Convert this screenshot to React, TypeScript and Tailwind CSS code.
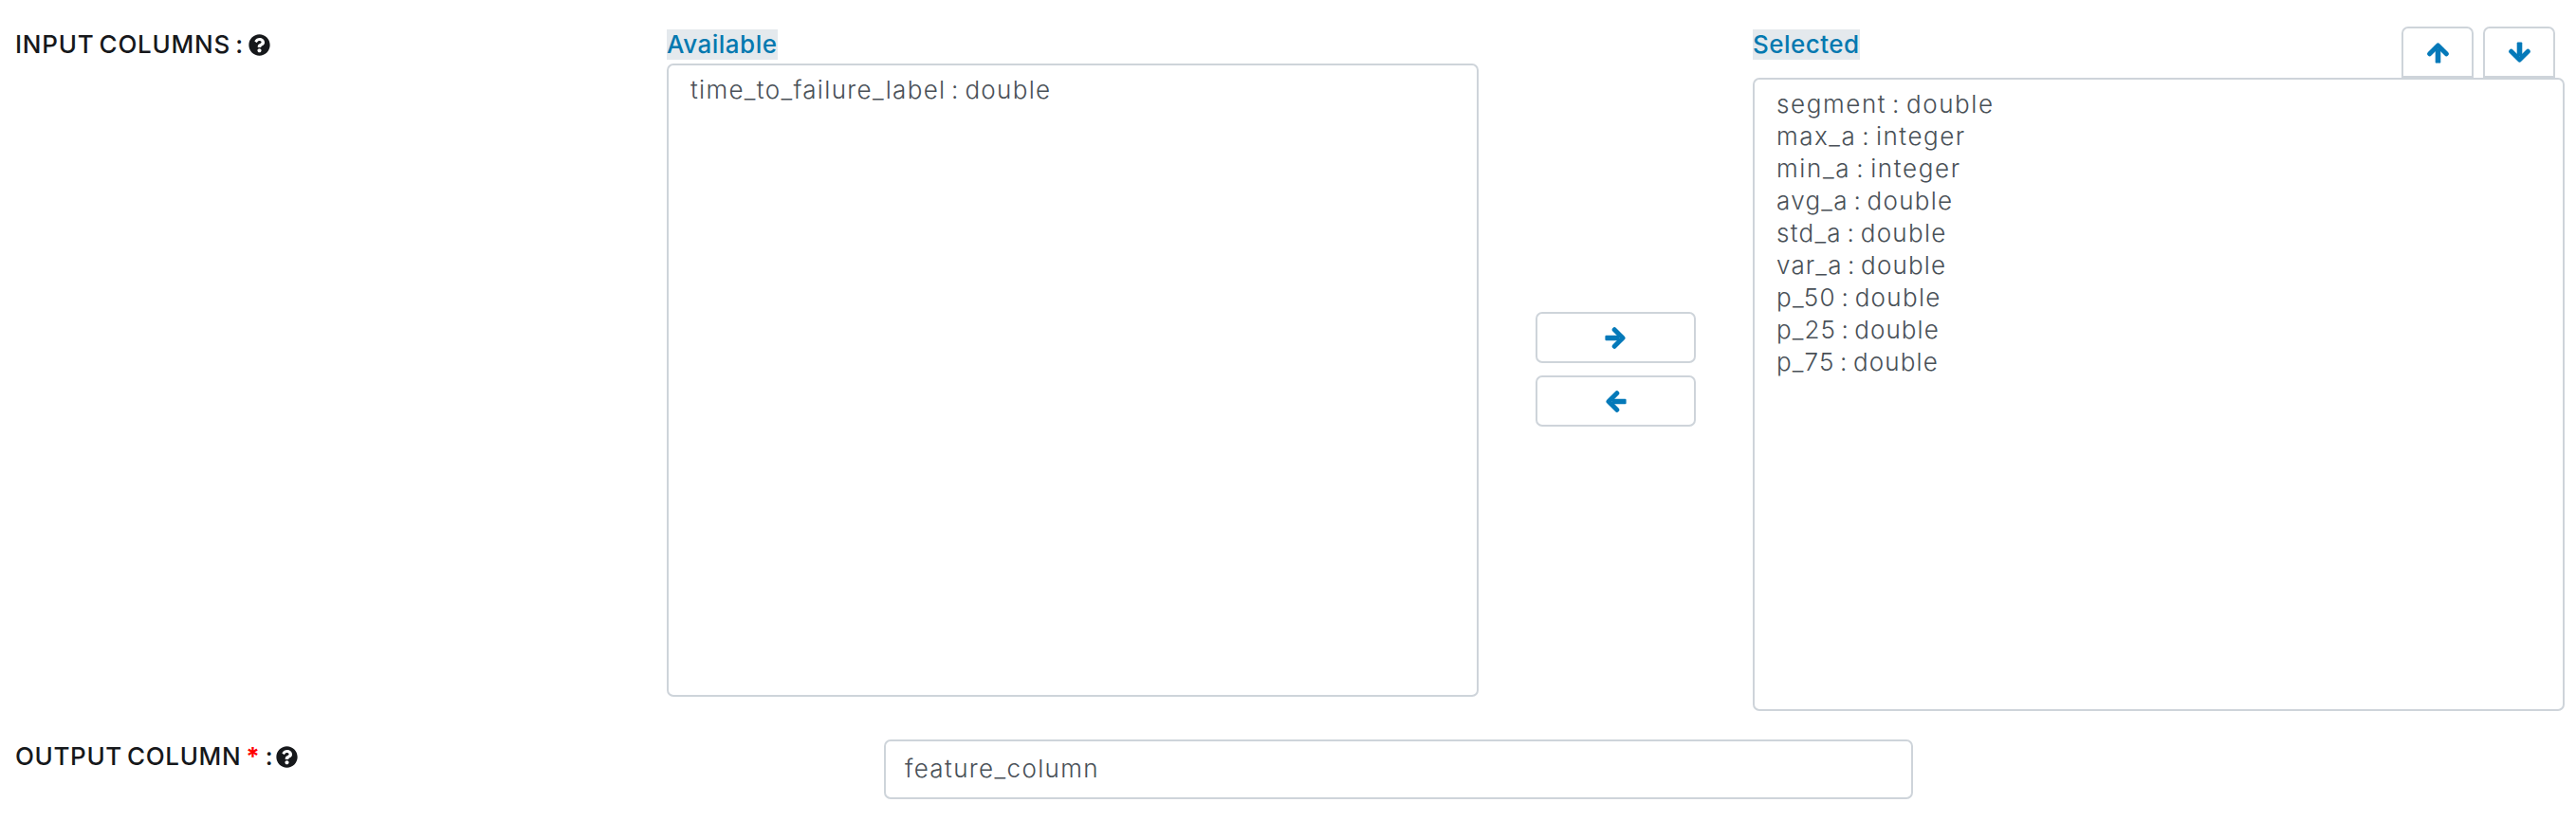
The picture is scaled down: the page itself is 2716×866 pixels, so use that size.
import { FaQuestionCircle } from "react-icons/fa";

const selected = [
  { text: "segment : double", cls: "tracking-[1.6px]" },
  { text: "max_a : integer", cls: "tracking-[1.53px]" },
  { text: "min_a : integer", cls: "tracking-[1.65px]" },
  { text: "avg_a : double", cls: "tracking-[1.28px]" },
  { text: "std_a : double", cls: "tracking-[1.28px]" },
  { text: "var_a : double", cls: "tracking-[1.17px]" },
  { text: "p_50 : double", cls: "tracking-[1.3px]" },
  { text: "p_25 : double", cls: "tracking-[1.08px]" },
  { text: "p_75 : double", cls: "tracking-[1.13px]" },
];

const btn = "flex items-center justify-center border-2 border-[#ced4da] bg-white text-[#0479b9]";
const list =
  "h-[668px] w-[856px] rounded-[7px] border-2 border-[#ced4da] py-[9px] pl-[23px] text-[26px] leading-[34px] font-[350] [word-spacing:-3px] text-[#495057]";
const heading = "h-8 bg-[#e4e9ed] text-[26px] leading-8 font-medium text-[#0479b0] whitespace-nowrap";

function Arrow({ className }: { className: string }) {
  return (
    <svg viewBox="0 0 23 23" className={`size-[23px] ${className}`} aria-hidden="true">
      <path d="M10.2 2.7 L19 11.5 L10.2 20.3" fill="none" stroke="currentColor" strokeWidth="5" strokeLinecap="round" strokeLinejoin="round" />
      <rect x="0.4" y="8.7" width="15" height="5.6" rx="1.2" fill="currentColor" />
    </svg>
  );
}

export default function App() {
  return (
    <div className="h-[866px] w-[2716px] overflow-hidden bg-white font-['Inter',sans-serif]">
      <div className="flex h-[750px] items-start">
        <label className="flex w-[703px] items-center pt-[31px] pl-4 text-[26px] leading-8 font-medium text-[#16181b]">
          <span className="w-[246px] tracking-[0.75px] whitespace-nowrap [word-spacing:-2.5px]">INPUT COLUMNS :</span>
          <FaQuestionCircle className="size-[23px]" />
        </label>
        <div className="flex w-[856px] flex-col items-start gap-1 pt-[31px]">
          <span className={`${heading} w-[117px] tracking-[0.5px]`}>Available</span>
          <ul className={list}>
            <li className="tracking-[1.32px]">time_to_failure_label : double</li>
          </ul>
        </div>
        <div className="flex w-[289px] flex-col items-center gap-[13px] pt-[329px]">
          <button className={`${btn} h-[54px] w-[169px] rounded-[7px]`}>
            <Arrow className="" />
          </button>
          <button className={`${btn} h-[54px] w-[169px] rounded-[7px]`}>
            <Arrow className="rotate-180" />
          </button>
        </div>
        <div className="flex w-[856px] flex-col">
          <div className="flex h-[82px] items-end justify-between pr-[10px]">
            <span className={`${heading} mb-[19px] w-[113px] tracking-[0.45px]`}>Selected</span>
            <div className="flex gap-[10px]">
              <button className={`${btn} h-[54px] w-[76px] rounded-t-[7px]`}>
                <Arrow className="-rotate-90" />
              </button>
              <button className={`${btn} h-[54px] w-[76px] rounded-t-[7px]`}>
                <Arrow className="rotate-90" />
              </button>
            </div>
          </div>
          <ul className={list}>
            {selected.map((s) => (
              <li key={s.text} className={s.cls}>
                {s.text}
              </li>
            ))}
          </ul>
        </div>
      </div>
      <div className="flex items-start pt-[30px]">
        <label className="flex w-[932px] items-center pt-[2px] pl-4 text-[26px] leading-8 font-medium text-[#16181b]">
          <span className="w-[275px] tracking-[0.65px] whitespace-nowrap [word-spacing:-2.5px]">
            OUTPUT COLUMN <span className="font-bold text-[#ff0000]">*</span> :
          </span>
          <FaQuestionCircle className="size-[23px]" />
        </label>
        <div className="h-[63px] w-[1085px] rounded-[7px] border-2 border-[#ced4da] pl-5 text-[26px] leading-[58px] font-[350] tracking-[1.36px] text-[#495057]">
          feature_column
        </div>
      </div>
    </div>
  );
}
